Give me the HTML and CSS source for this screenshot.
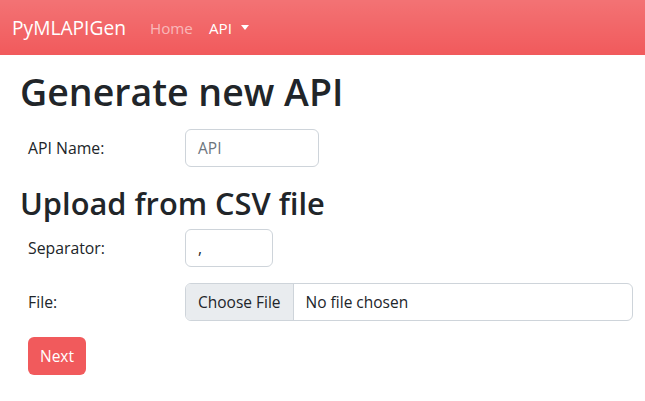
FILE: index.html
```html
<!DOCTYPE html>
<html>
<head>
<meta charset="utf-8">
<link rel="stylesheet" href="styles.css">
</head>
<body>
<nav class="navbar">
  <span class="brand">PyMLAPIGen</span>
  <span class="nav-link muted">Home</span>
  <span class="nav-link active">API <span class="caret"></span></span>
</nav>
<main class="container">
  <h1>Generate new API</h1>
  <div class="row">
    <label class="lbl">API Name:</label>
    <div class="field field-name">API</div>
  </div>
  <h2>Upload from CSV file</h2>
  <div class="row">
    <label class="lbl">Separator:</label>
    <div class="field field-sep">,</div>
  </div>
  <div class="row">
    <label class="lbl">File:</label>
    <div class="file">
      <span class="file-btn">Choose File</span>
      <span class="file-text">No file chosen</span>
    </div>
  </div>
  <button class="btn">Next</button>
</main>
</body>
</html>
```

FILE: styles.css
```css
* { box-sizing: border-box; }
body {
  margin: 0;
  font-family: "Open Sans", "Noto Sans", sans-serif;
  color: #212529;
  background: #fff;
  font-size: 15.5px;
}
.navbar {
  height: 55px;
  display: flex;
  align-items: center;
  padding: 0 12px;
  background: #f15a5c linear-gradient(180deg, rgba(255,255,255,0.15), rgba(255,255,255,0));
}
.brand {
  color: #fff;
  font-size: 19.2px;
  margin-right: 24px;
}
.nav-link {
  font-size: 15.2px;
  margin-right: 16px;
}
.muted { color: rgba(255,255,255,0.55); }
.active { color: #fff; display: flex; align-items: center; }
.caret {
  display: inline-block;
  margin-left: 9px;
  width: 0; height: 0;
  border-left: 4.5px solid transparent;
  border-right: 4.5px solid transparent;
  border-top: 5px solid #fff;
}
.container { padding: 0 12px 0 20px; }
h1 {
  font-size: 37.5px;
  font-weight: 600;
  margin: 14px 0 15px;
  line-height: 1.2;
}
h2 {
  font-size: 30.8px;
  font-weight: 600;
  margin: 18px 0 7px;
  line-height: 1.2;
}
.row {
  display: flex;
  align-items: center;
  margin-bottom: 16px;
}
.lbl {
  width: 165px;
  padding-left: 8px;
  font-size: 15.8px;
}
.field {
  height: 38px;
  border: 1px solid #ced4da;
  border-radius: 6px;
  padding: 0 12px;
  display: flex;
  align-items: center;
  font-size: 15.5px;
  color: #6c757d;
}
.field-name { width: 134px; }
.field-sep { width: 88px; color: #212529; }
.file {
  flex: 1;
  height: 38px;
  border: 1px solid #ced4da;
  border-radius: 6px;
  display: flex;
  overflow: hidden;
  font-size: 15.5px;
}
.file-btn {
  background: #e9ecef;
  border-right: 1px solid #ced4da;
  padding: 0 12px;
  display: flex;
  align-items: center;
}
.file-text {
  padding: 0 12px;
  display: flex;
  align-items: center;
}
.btn {
  margin-left: 8px;
  margin-top: 0;
  height: 38px;
  padding: 0 12px;
  border: none;
  border-radius: 6px;
  background: #f15a5c;
  color: #fff;
  font-family: inherit;
  font-size: 15.5px;
}
```
